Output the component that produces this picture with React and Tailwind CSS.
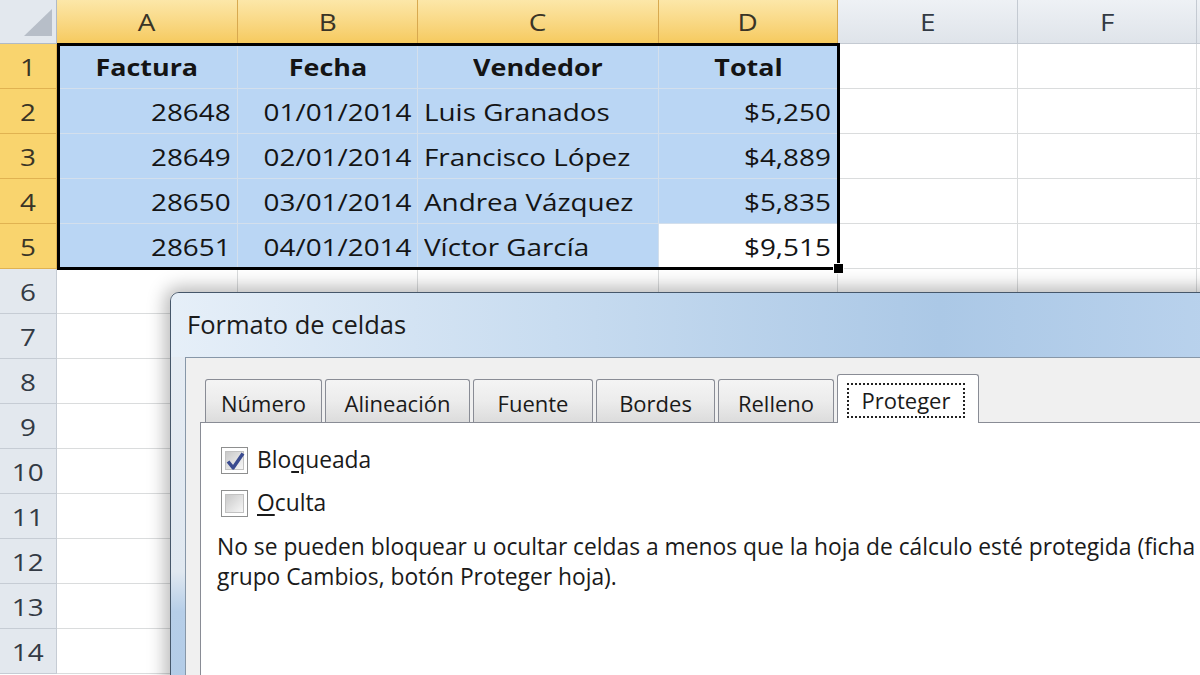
import React from 'react';

const data = [
  ['Factura', 'Fecha', 'Vendedor', 'Total'],
  ['28648', '01/01/2014', 'Luis Granados', '$5,250'],
  ['28649', '02/01/2014', 'Francisco López', '$4,889'],
  ['28650', '03/01/2014', 'Andrea Vázquez', '$5,835'],
  ['28651', '04/01/2014', 'Víctor García', '$9,515'],
];

const COLS = ['A', 'B', 'C', 'D', 'E', 'F', 'G'];

function T({ children, align, bold }) {
  let cls = 'inline-block whitespace-nowrap scale-x-[1.16] origin-left';
  if (align === 'right') cls = 'inline-block whitespace-nowrap scale-x-[1.16] origin-right';
  if (align === 'center') cls = 'inline-block whitespace-nowrap scale-x-[1.16] origin-center';
  if (bold) cls = 'inline-block whitespace-nowrap scale-x-[1.12] origin-center font-bold';
  return <span className={cls}>{children}</span>;
}

function ColHeader({ letter }) {
  const sel = ['A', 'B', 'C', 'D'].includes(letter);
  const label = letter === 'G' ? '' : letter;
  if (sel) {
    return (
      <div className="flex items-center justify-center pt-[1px] bg-linear-to-b from-[#fce7a8] to-[#f6ca5e] border-r border-[#d8a94f] border-b border-[#c99337] text-[24px] text-[#3a3426]">
        <T align="center">{label}</T>
      </div>
    );
  }
  return (
    <div className="flex items-center justify-center pt-[1px] bg-linear-to-b from-[#eef1f5] to-[#dfe4ea] border-r border-[#c4cad2] border-b border-[#a9b3bf] text-[24px] text-[#333a44]">
      {label ? <T align="center">{label}</T> : null}
    </div>
  );
}

function RowHeader({ n }) {
  if (n <= 5) {
    return (
      <div className="flex items-center justify-center pt-[2px] bg-[#f9d46e] border-b border-[#e0b251] border-r border-[#c8952f] text-[24px] text-[#3a3426]">
        <T align="center">{n}</T>
      </div>
    );
  }
  return (
    <div className="flex items-center justify-center pt-[2px] bg-[#e3e8ee] border-b border-[#c6ccd4] border-r border-[#a3aebb] text-[24px] text-[#333a44]">
      <T align="center">{n}</T>
    </div>
  );
}

function DataCell({ r, c }) {
  const row = data[r - 1];
  const inSel = row && c < 4;
  const text = row && c < 4 ? row[c] : '';
  const isActive = r === 5 && c === 3;
  let align = 'left';
  if (r === 1) align = 'center';
  else if (c === 0 || c === 1 || c === 3) align = 'right';
  const base = inSel
    ? isActive
      ? 'bg-white border-r border-b border-[#d2deeb]'
      : 'bg-[#bad6f4] border-r border-b border-[#d3dfec]'
    : 'bg-white border-r border-b border-[#dadcdd]';
  const justify =
    align === 'center' ? 'justify-center' : align === 'right' ? 'justify-end pr-[6px]' : 'justify-start pl-[6px]';
  return (
    <div className={`flex items-center pt-[2px] text-[24px] text-[#141414] ${base} ${justify}`}>
      {text ? <T align={align} bold={r === 1}>{text}</T> : null}
    </div>
  );
}

function CheckBox({ checked }) {
  return (
    <div className="w-[27px] h-[27px] border border-[#8e8f8f] bg-white p-[3px] shrink-0">
      <div className="relative w-full h-full border border-[#c2c2c2] bg-linear-to-br from-[#c9c9c9] to-[#f7f7f7]">
        {checked ? (
          <svg viewBox="0 0 20 20" className="absolute -inset-[2px] w-[23px] h-[23px]">
            <path d="M3.5 10 L8 15.5 L16.5 3" fill="none" stroke="#3a4b90" strokeWidth="3" strokeLinejoin="round" />
          </svg>
        ) : null}
      </div>
    </div>
  );
}

function Tab({ label, w }) {
  return (
    <div
      className="h-[43px] shrink-0 border border-b-0 border-[#898c95] rounded-t-[3px] bg-linear-to-b from-[#f4f4f4] via-[#ececec] to-[#dcdcdc] flex items-center justify-center pt-[4px] text-[22px] text-[#1a1a1a]"
      style={{ width: w }}
    >
      {label}
    </div>
  );
}

export default function App() {
  const rows = Array.from({ length: 14 }, (_, i) => i + 1);
  return (
    <div className="relative w-[1200px] h-[675px] overflow-hidden bg-white font-['Open_Sans',sans-serif]">
      <div className="grid grid-cols-[57px_181px_180px_241px_179px_180px_179px_180px] grid-rows-[44px_repeat(14,45px)] w-[1377px]">
        <div className="flex items-end justify-end pr-[4px] pb-[7px] bg-[#e3e8ee] border-r border-b border-[#b1bac5]">
          <svg width="28" height="27" viewBox="0 0 28 27">
            <polygon points="28,0 28,27 0,27" fill="#b7bec8" />
          </svg>
        </div>
        {COLS.map((l) => (
          <ColHeader key={l} letter={l} />
        ))}
        {rows.map((r) => (
          <React.Fragment key={r}>
            <RowHeader n={r} />
            {COLS.map((l, c) => (
              <DataCell key={l} r={r} c={c} />
            ))}
          </React.Fragment>
        ))}
      </div>

      {/* selection border */}
      <div className="absolute left-[57px] top-[43px] w-[783px] h-[227px] border-[3px] border-black pointer-events-none" />
      <div className="absolute left-[833px] top-[263px] w-[11px] h-[11px] bg-black border border-white" />

      {/* dialog */}
      <div className="absolute left-[170px] top-[292px] w-[1100px] h-[400px] rounded-tl-[9px] border border-[#46576a] bg-[linear-gradient(to_bottom,#e7edf4_0%,#e0e8f0_70%,#b6cee8_80%,#b3cce7_100%)] shadow-[0_0_18px_5px_rgba(0,0,0,0.28)] flex flex-col overflow-hidden">
        <div className="h-[64px] shrink-0 rounded-tl-[8px] bg-[linear-gradient(to_right,#e6eff8_0%,#c8dcf0_35%,#abc8e6_70%,#bcd4ee_100%)] pl-[16px] flex items-center pb-[2px]">
          <span className="text-[25.5px] text-[#1b1b1b] whitespace-nowrap">Formato de celdas</span>
        </div>
        <div className="ml-[14px] flex-1 min-h-0 overflow-hidden border-t border-l border-[#8797a8] bg-[#f0f0f0] pt-[16px] pl-[14px]">
          <div className="flex items-end gap-[3px] ml-[5px] h-[48px]">
            <Tab label="Número" w={117} />
            <Tab label="Alineación" w={145} />
            <Tab label="Fuente" w={120} />
            <Tab label="Bordes" w={119} />
            <Tab label="Relleno" w={116} />
            <div className="relative z-10 -mb-px h-[49px] w-[142px] shrink-0 border border-b-0 border-[#898c95] rounded-t-[3px] bg-white pt-[8px] pl-[9px]">
              <div className="h-[35px] w-[118px] border-2 border-dotted border-[#222] flex items-center justify-center text-[22px] text-[#1a1a1a]">
                Proteger
              </div>
            </div>
          </div>
          <div className="h-[300px] border-t border-l border-[#898c95] bg-white pt-[23px] pl-[16px] text-[22.8px] text-[#1a1a1a]">
            <div className="flex flex-col gap-[15px] ml-[4px]">
              <div className="flex items-center h-[28px] gap-[9px]">
                <CheckBox checked />
                <span className="whitespace-nowrap">
                  Blo<span className="underline underline-offset-[3px]">q</span>ueada
                </span>
              </div>
              <div className="flex items-center h-[28px] gap-[9px]">
                <CheckBox />
                <span className="whitespace-nowrap">
                  <span className="underline underline-offset-[3px]">O</span>culta
                </span>
              </div>
            </div>
            <div className="mt-[15px] leading-[30px]">
              <div className="whitespace-nowrap">
                No se pueden bloquear u ocultar celdas a menos que la hoja de cálculo esté protegida (ficha Revisar,
              </div>
              <div className="whitespace-nowrap">grupo Cambios, botón Proteger hoja).</div>
            </div>
          </div>
        </div>
      </div>
    </div>
  );
}
